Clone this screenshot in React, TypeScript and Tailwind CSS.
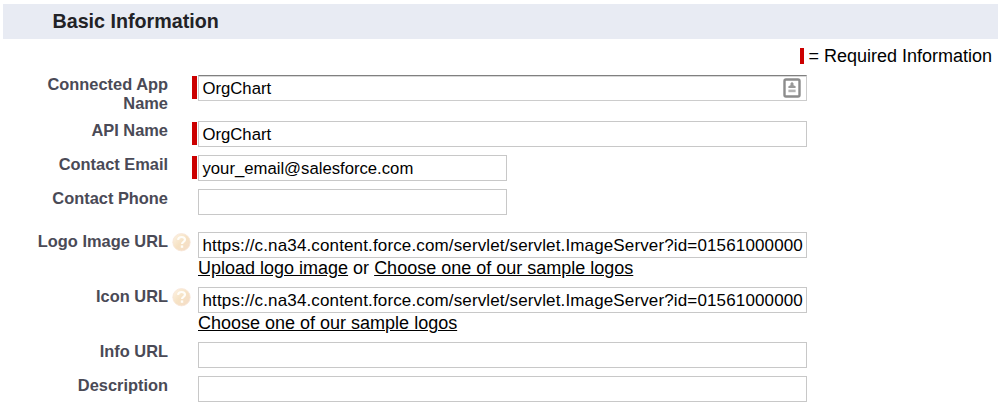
import type { ReactNode } from "react";

function HelpIcon() {
  return (
    <svg width="19" height="19" viewBox="0 0 19 19" className="block" aria-label="Help">
      <defs>
        <linearGradient id="orb" x1="0" y1="0" x2="1" y2="1">
          <stop offset="0" stopColor="#fdf4e6" />
          <stop offset="0.5" stopColor="#f6e2c4" />
          <stop offset="1" stopColor="#f4dcc8" />
        </linearGradient>
      </defs>
      <circle cx="9.5" cy="9.2" r="8.7" fill="url(#orb)" stroke="#f7e6d8" strokeWidth="0.8" />
      <path
        d="M6 6.9C6.2 4.9 7.6 4 9.6 4c2 0 3.4 1 3.4 2.7 0 2.1-3 2.2-3 4.4"
        fill="none"
        stroke="#fffdf8"
        strokeWidth="2.2"
      />
      <rect x="8.8" y="12.4" width="2.4" height="2.4" fill="#fffdf8" />
    </svg>
  );
}

function ContactIcon() {
  return (
    <svg width="18" height="20" viewBox="0 0 18 20" className="block">
      <rect x="1.5" y="1.5" width="15" height="17" rx="1.5" fill="#fff" stroke="#8c8c8c" strokeWidth="2.4" />
      <path d="M9 4l1.5 1.3v2l2.1.9v1.9H5.4V8.2l2.1-.9v-2z" fill="#999" />
      <rect x="5.4" y="11.6" width="7.2" height="2.6" fill="#b4b4b4" />
    </svg>
  );
}

type RowProps = {
  label: ReactNode;
  value?: string;
  required?: boolean;
  help?: boolean;
  narrow?: boolean;
  first?: boolean;
  space: string;
  children?: ReactNode;
};

function Row({ label, value = "", required, help, narrow, first, space, children }: RowProps) {
  return (
    <div className={`flex items-start ${space}`}>
      <div className="w-[168px] shrink-0 text-right text-[16.4px] leading-[19px] font-bold text-[#4a4a56]">
        {label}
      </div>
      <div className="flex w-[24px] shrink-0 justify-end pt-[1px] pr-[1px]">{help && <HelpIcon />}</div>
      <div className={`mt-[1px] mr-[1px] h-[23px] w-[5px] shrink-0 ${required ? "bg-[#cc0000]" : ""}`} />
      <div className="text-[18px] leading-[20px]">
        <div
          className={`flex h-[26px] items-center overflow-hidden border pl-[3.5px] leading-[20px] whitespace-nowrap ${
            narrow ? "w-[309px]" : "w-[609px]"
          } ${first ? "border-[#cccccc] border-t-[#808080] shadow-[inset_0_1px_0_#d8d8d8]" : "border-[#c8c8c8]"} ${
            help ? "text-[17px] tracking-[0.137px]" : "text-[16.7px]"
          }`}
        >
          <span className="grow pt-[1px]">{value}</span>
          {first && (
            <span className="mr-[5px]">
              <ContactIcon />
            </span>
          )}
        </div>
        {children}
      </div>
    </div>
  );
}

const imageUrl = "https://c.na34.content.force.com/servlet/servlet.ImageServer?id=01561000000";

export default function App() {
  return (
    <main className="h-[414px] w-[1003px] overflow-hidden bg-white pt-[4px] font-['Liberation_Sans',Arial,sans-serif] text-black">
      <h2 className="mr-[5px] ml-[3px] h-[35px] bg-[#e8ebf3] pl-[49.5px] text-[19.7px] leading-[34px] font-bold text-[#222226]">
        Basic Information
      </h2>
      <div className="flex h-[36px] items-start justify-end pt-[7px] pr-[11px] text-[18px] leading-[20px]">
        <span className="mt-[2px] mr-[4px] h-[16px] w-[4px] bg-[#cc0000]" />
        <span>= Required Information</span>
      </div>
      <Row first required space="h-[46px]" value="OrgChart" label={<>Connected App<br />Name</>} />
      <Row required space="h-[34px]" value="OrgChart" label="API Name" />
      <Row required narrow space="h-[34px]" value="your_email@salesforce.com" label="Contact Email" />
      <Row narrow space="h-[43px]" label="Contact Phone" />
      <Row help space="h-[55px]" value={imageUrl} label="Logo Image URL">
        <div className="whitespace-nowrap">
          <a className="underline">Upload logo image</a> or <a className="underline">Choose one of our sample logos</a>
        </div>
      </Row>
      <Row help space="h-[55px]" value={imageUrl} label="Icon URL">
        <a className="underline">Choose one of our sample logos</a>
      </Row>
      <Row space="h-[34px]" label="Info URL" />
      <Row space="h-[34px]" label="Description" />
    </main>
  );
}
